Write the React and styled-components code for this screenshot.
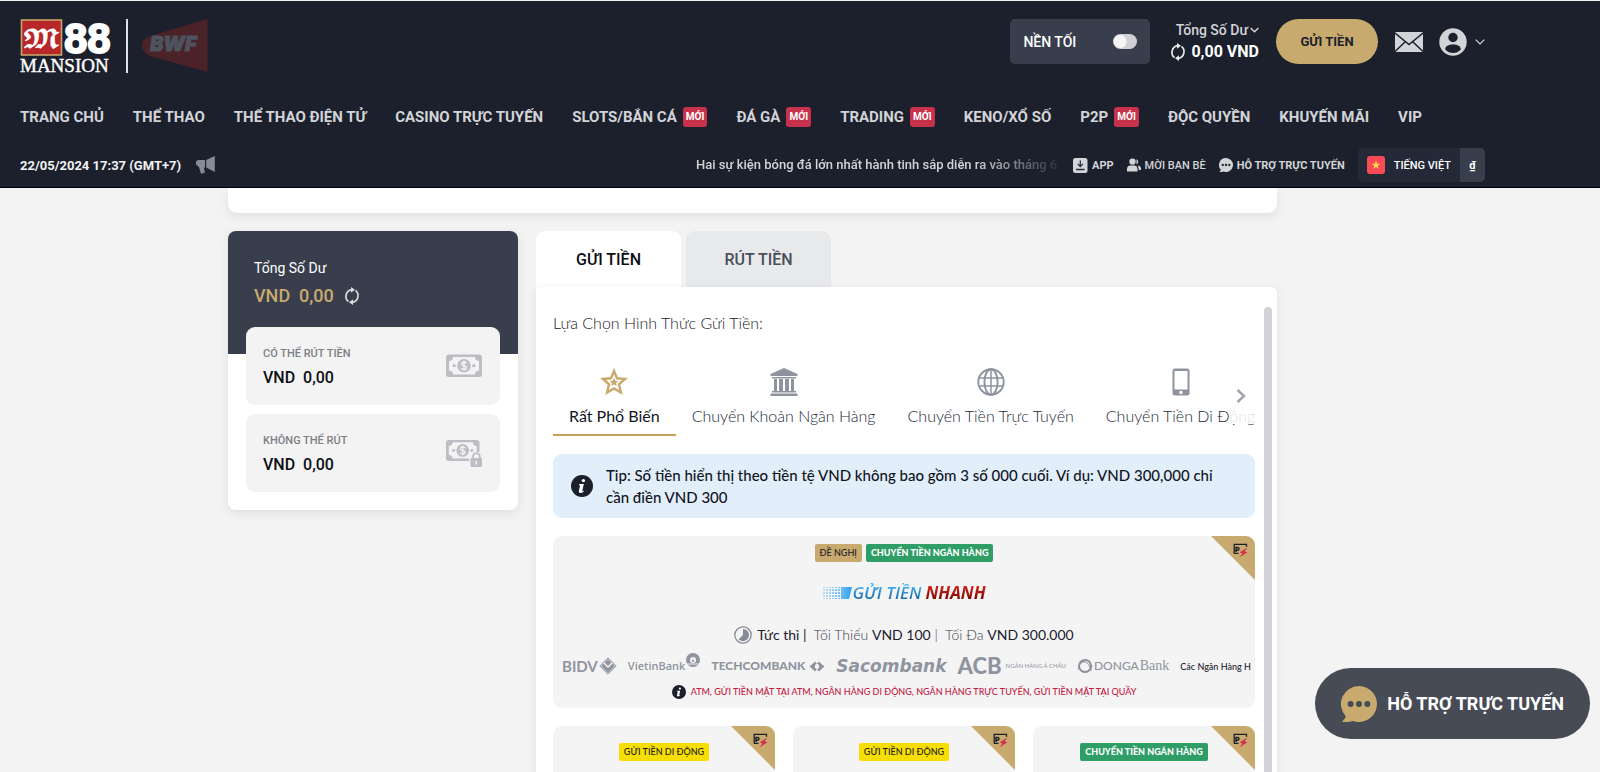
import React from "react";
import styled, { createGlobalStyle } from "styled-components";

const Global = createGlobalStyle`
  * { box-sizing: border-box; }
  body { margin: 0; background: #f3f3f3; font-family: Roboto, "Liberation Sans", sans-serif; }
  button { font: inherit; color: inherit; background: none; border: 0; padding: 0; cursor: pointer; }
  a { color: inherit; text-decoration: none; }
  svg { display: block; flex: none; }
`;

const Page = styled.div`
  height: 100vh;
  overflow: hidden;
  display: flex;
  flex-direction: column;
`;

/* Header */
const Header = styled.header`
  flex: none;
  position: relative;
  z-index: 2;
  background: #1b202c;
  border-top: 1px solid #eef1f1;
  border-bottom: 1px solid #000;
`;
const HeaderInner = styled.div`
  max-width: 1505px;
  padding: 18px 20px 5px;
`;
const TopRow = styled.div`
  display: flex;
  justify-content: space-between;
  align-items: flex-start;
  height: 54px;
`;
const Brand = styled.a`
  display: flex;
  align-items: center;
  gap: 14px;
`;
const BrandRule = styled.span`
  width: 2px;
  height: 54px;
  background: #dfe1e4;
`;
const Account = styled.div`
  display: flex;
  align-items: center;
  height: 45px;
  color: #d3d4d8;
`;
const ThemeSwitch = styled.label`
  display: flex;
  align-items: center;
  justify-content: space-between;
  width: 140px;
  height: 45px;
  padding: 0 13px;
  border-radius: 5px;
  background: #393e4d;
  color: #fff;
  font-size: 14px;
  font-weight: 500;
  cursor: pointer;
  input {
    appearance: none;
    width: 24px;
    height: 15px;
    margin: 0;
    border-radius: 8px;
    background: radial-gradient(circle at 7px 50%, #f5f5f5 6px, transparent 7px) #cfd0d3;
  }
`;
const Balance = styled.div`
  display: flex;
  flex-direction: column;
  align-items: flex-end;
  gap: 2px;
  margin: 0 17px 0 20px;
  padding-bottom: 2px;
`;
const BalanceLabel = styled.button`
  display: flex;
  align-items: center;
  gap: 2px;
  font-size: 14px;
  font-weight: 500;
  line-height: 20px;
`;
const BalanceValue = styled.div`
  display: flex;
  align-items: center;
  gap: 5px;
  color: #fff;
  font-size: 16px;
  font-weight: 700;
  line-height: 20px;
`;
const DepositButton = styled.button`
  width: 102px;
  height: 45px;
  border-radius: 23px;
  background: #c9aa6e;
  color: #1b202c;
  font-size: 13px;
  font-weight: 700;
`;
const MailButton = styled.button`
  margin-left: 17px;
`;
const UserButton = styled.button`
  display: flex;
  align-items: center;
  gap: 8px;
  margin-left: 16px;
`;
const Nav = styled.nav`
  display: flex;
  align-items: center;
  gap: 29px;
  height: 48px;
  margin-top: 20px;
  color: #d3d4d8;
  font-size: 15px;
  font-weight: 700;
  white-space: nowrap;
`;
const NavLink = styled.a`
  display: flex;
  align-items: center;
  gap: 6px;
`;
const NewBadge = styled.span`
  padding: 0 3px;
  border-radius: 3px;
  background: #c8314b;
  color: #fff;
  font-size: 10px;
  font-weight: 700;
  line-height: 20px;
`;
const InfoRow = styled.div`
  display: flex;
  align-items: center;
  height: 34px;
  margin-top: 7px;
  color: #d3d4d8;
  font-size: 11px;
  font-weight: 500;
  white-space: nowrap;
`;
const Clock = styled.time`
  margin-right: 15px;
  color: #f2f2f2;
  font-size: 13px;
  font-weight: 700;
`;
const Ticker = styled.p`
  flex: none;
  width: 370px;
  margin: 0 7px 0 auto;
  font-size: 13px;
  font-weight: 500;
  line-height: 20px;
  mask-image: linear-gradient(90deg, #000 75%, transparent);
`;
const QuickLinks = styled.div`
  display: flex;
  align-items: center;
  gap: 13px;
  margin-right: 13px;
`;
const QuickLink = styled.a`
  display: flex;
  align-items: center;
  gap: 4px;
  font-weight: ${(p) => (p.$strong ? 700 : 500)};
`;
const Locale = styled.div`
  display: flex;
  height: 34px;
  border-radius: 5px;
  overflow: hidden;
  background: #232937;
  color: #fff;
`;
const LanguageButton = styled.button`
  display: flex;
  align-items: center;
  gap: 9px;
  padding: 0 9px;
`;
const CurrencyButton = styled.button`
  width: 25px;
  background: #393e4d;
  font-weight: 700;
`;

/* Main area */
const Main = styled.main`
  flex: 1;
  min-height: 0;
  width: 100%;
  max-width: 1505px;
  padding: 0 228px;
  display: flex;
  flex-direction: column;
`;
const PreviousCard = styled.section`
  flex: none;
  height: 25px;
  border-radius: 0 0 9px 9px;
  background: #fff;
  box-shadow: 0 3px 10px rgba(40, 45, 60, 0.1);
`;
const Columns = styled.div`
  flex: 1;
  min-height: 0;
  display: flex;
  align-items: flex-start;
  gap: 18px;
  margin-top: 18px;
`;
const Wallet = styled.aside`
  flex: none;
  width: 290px;
  border-radius: 8px;
  background: linear-gradient(#393e4d 123px, #fff 123px);
  box-shadow: 0 3px 10px rgba(40, 45, 60, 0.1);
`;
const WalletHead = styled.div`
  height: 96px;
  padding: 25px 26px 0;
  color: #fff;
  font-size: 14px;
  line-height: 24px;
`;
const WalletTotal = styled.div`
  display: flex;
  align-items: center;
  gap: 10px;
  margin-top: 4px;
  color: #c9aa6e;
  font-size: 18px;
  font-weight: 500;
  white-space: pre;
`;
const WalletList = styled.div`
  display: flex;
  flex-direction: column;
  gap: 9px;
  padding: 0 18px 18px;
`;
const WalletItem = styled.div`
  display: flex;
  align-items: center;
  justify-content: space-between;
  height: 78px;
  padding: 0 18px 0 17px;
  border-radius: 9px;
  background: #f3f3f3;
`;
const WalletText = styled.div`
  color: #0d0f14;
  font-size: 16px;
  font-weight: 500;
  line-height: 24px;
  white-space: pre;
  small {
    display: block;
    color: #7d8085;
    font-size: 11px;
    font-weight: 500;
  }
`;
const Cashier = styled.section`
  flex: 1;
  min-width: 0;
  height: 100%;
  display: flex;
  flex-direction: column;
`;
const CashierTabs = styled.div`
  display: flex;
  gap: 5px;
`;
const CashierTab = styled.button`
  width: 145px;
  height: 56px;
  border-radius: 9px 9px 0 0;
  background: ${(p) => (p.$active ? "#fff" : "#e8e9eb")};
  color: ${(p) => (p.$active ? "#0d0f14" : "#4a4f5b")};
  font-size: 16px;
  font-weight: 500;
`;
const Panel = styled.div`
  flex: 1;
  min-height: 0;
  display: flex;
  gap: 9px;
  padding: 20px 5px 0 17px;
  border-radius: 0 6px 0 0;
  background: #fff;
  box-shadow: 0 3px 10px rgba(40, 45, 60, 0.1);
  font-family: Lato, "Liberation Sans", sans-serif;
`;
const PanelBody = styled.div`
  flex: 1;
  min-width: 0;
  overflow: hidden;
`;
const ScrollThumb = styled.div`
  flex: none;
  width: 8px;
  border-radius: 4px 4px 0 0;
  background: #d2d3d8;
`;
const Heading = styled.h2`
  margin: 4px 0 0;
  color: #1b202c;
  font-size: 16px;
  font-weight: 300;
  line-height: 24px;
`;
const MethodTabs = styled.div`
  position: relative;
  display: flex;
  margin-top: 33px;
  overflow: hidden;
`;
const MethodTab = styled.button`
  flex: none;
  display: flex;
  flex-direction: column;
  align-items: center;
  gap: 8px;
  height: 68px;
  padding: 0 16px;
  border-bottom: 2px solid ${(p) => (p.$active ? "#c9a15a" : "transparent")};
  color: ${(p) => (p.$active ? "#11151f" : "#242a38")};
  font-size: 16px;
  font-weight: ${(p) => (p.$active ? 400 : 300)};
  line-height: 24px;
  svg { color: ${(p) => (p.$active ? "#c9aa6e" : "#8e939e")}; }
`;
const NextButton = styled.button`
  position: absolute;
  top: 0;
  right: 0;
  display: flex;
  align-items: center;
  height: 56px;
  padding: 0 9px 0 6px;
  background: rgba(255, 255, 255, 0.85);
`;
const Tip = styled.div`
  display: flex;
  align-items: center;
  gap: 13px;
  margin-top: 18px;
  padding: 10px 18px;
  border-radius: 9px;
  background: #e2eefa;
  color: #11151f;
  font-size: 15px;
  font-weight: 500;
  line-height: 22px;
  p { margin: 0; }
`;
const MethodCard = styled.article`
  position: relative;
  display: flex;
  flex-direction: column;
  align-items: center;
  min-height: ${(p) => (p.$wide ? 172 : 160)}px;
  padding: ${(p) => (p.$wide ? "8px 9px 0" : "17px 9px 0")};
  border-radius: 9px;
  background: #f4f4f5;
  overflow: hidden;
`;
const Methods = styled.div`
  display: grid;
  grid-template-columns: repeat(3, 1fr);
  gap: 18px;
  margin-top: 18px;
  ${MethodCard}:first-child { grid-column: 1 / -1; }
`;
const Corner = styled.span`
  position: absolute;
  top: 0;
  right: 0;
  width: 44px;
  height: 44px;
  padding: 7px 7px 0 22px;
  background: #c9aa6e;
  clip-path: polygon(0 0, 100% 0, 100% 100%);
`;
const Tags = styled.div`
  display: flex;
  gap: 4px;
`;
const tagColors = {
  gold: "#c9aa6e",
  green: "#2e9d66",
  yellow: "#f6de00",
};
const Tag = styled.span`
  padding: 0 5px;
  border-radius: 2px;
  background: ${(p) => tagColors[p.$tone]};
  color: ${(p) => (p.$tone === "green" ? "#fff" : "#1b202c")};
  font-size: 9px;
  font-weight: ${(p) => (p.$tone === "green" ? 900 : 500)};
  line-height: 18px;
  white-space: nowrap;
`;
const MethodName = styled.h3`
  display: flex;
  align-items: center;
  margin: 17px 0 0;
  font-family: "Open Sans", "Noto Sans", sans-serif;
  font-size: 17px;
  font-style: italic;
  font-weight: 600;
  line-height: 28px;
  span {
    padding-right: 4px;
    background: linear-gradient(#3fb0f5 25%, #125c9e 80%);
    background-clip: text;
    color: transparent;
  }
  b {
    padding-right: 2px;
    background: linear-gradient(#d3231b 25%, #6b0804 80%);
    background-clip: text;
    color: transparent;
    font-weight: 700;
  }
`;
const Limits = styled.p`
  display: flex;
  align-items: center;
  margin: 18px 0 0;
  color: #3b404d;
  font-size: 14px;
  font-weight: 300;
  line-height: 20px;
  white-space: pre;
  b { color: #1b202c; font-weight: 400; }
  svg { margin-right: 5px; }
`;
const BankStrip = styled.div`
  align-self: stretch;
  display: flex;
  align-items: center;
  height: 28px;
  margin-top: 7px;
  gap: 11px;
  color: #8f949e;
  white-space: nowrap;
`;
const Bank = styled.span`
  display: flex;
  align-items: ${(p) => p.$align || "center"};
  gap: ${(p) => p.$gap || 1}px;
`;
const BankWord = styled.span`
  font-family: ${(p) => p.$family || "Lato"}, sans-serif;
  font-size: ${(p) => p.$size}px;
  font-weight: ${(p) => p.$weight || 400};
  font-style: ${(p) => (p.$italic ? "italic" : "normal")};
  line-height: 26px;
`;
const MoreBanks = styled.span`
  color: #1b202c;
  font-size: 9px;
  font-weight: 500;
`;
const Channels = styled.p`
  display: flex;
  align-items: center;
  gap: 5px;
  margin: 5px 0 0;
  color: #c3203f;
  font-size: 9px;
  font-weight: 500;
  line-height: 14px;
  white-space: nowrap;
`;
const ChatButton = styled.button`
  position: fixed;
  right: 10px;
  bottom: 33px;
  z-index: 3;
  display: flex;
  align-items: center;
  gap: 10px;
  height: 71px;
  padding: 0 26px;
  border-radius: 36px;
  background: #474b55;
  color: #fff;
  font-size: 18px;
  font-weight: 700;
`;

/* Drawings */
const MansionLogo = () => (
  <svg width="92" height="54" viewBox="0 0 92 54" overflow="visible" aria-label="M88 Mansion">
    <rect x="1.5" y="1" width="40" height="35" fill="#b8272a" stroke="#c8a36a" strokeWidth="1.6" />
    <text x="21.5" y="28" fill="#fff" stroke="#fff" strokeWidth="0.8" fontSize="25" textAnchor="middle" fontFamily="'DejaVu Math TeX Gyre', 'DejaVu Sans', serif">𝕸</text>
    <text x="44" y="34" fill="#fff" stroke="#fff" strokeWidth="1.8" fontSize="42" fontWeight="700" fontFamily="Liberation Sans">88</text>
    <text x="0" y="53" fill="#fff" stroke="#fff" strokeWidth="0.4" fontSize="19" fontFamily="Liberation Serif">MANSION</text>
  </svg>
);
const BwfLogo = () => (
  <svg width="66" height="54" viewBox="0 0 66 54" aria-label="BWF">
    <path d="M65.500 0V53L8 37Q0 33 0 26.500T8 17Z" fill="#4a2227" />
    <text x="8" y="32" fill="#4d535e" stroke="#4d535e" fontSize="20" fontWeight="900" fontStyle="italic" fontFamily="Inter">BWF</text>
  </svg>
);
const Chevron = ({ width = 9, right = false, stroke = 1.6 }) =>
  right ? (
    <svg width="10" height="14" viewBox="0 0 10 14" fill="none" stroke="#a2a5ae" strokeWidth="2.500"><path d="M1.500 1l6.500 6-6.500 6" /></svg>
  ) : (
    <svg width={width} height="6" viewBox="0 0 10 6" fill="none" stroke="currentColor" strokeWidth={stroke}><path d="M.7.7L5 5 9.300.7" /></svg>
  );
const Refresh = ({ color = "#e9eaec" }) => (
  <svg width="16" height="18" viewBox="0 0 16 18" fill="none" stroke={color} strokeWidth="1.700">
    <path d="M4.500 14.700A6.900 6.900 0 0 1 7.500 2.600M11.500 3.300A6.900 6.900 0 0 1 8.500 15.400" />
    <path d="M7 0l4 2.700-4 3zM9 12.300l-4 3L9 18z" fill={color} stroke="none" />
  </svg>
);
const Mail = () => (
  <svg width="28" height="20" viewBox="0 0 28 20">
    <rect width="28" height="20" rx="1" fill="#d3d4d8" />
    <path d="M0 1l14 11.500L28 1M0 19.500l10.500-10M28 19.500l-10.500-10" fill="none" stroke="#1b202c" strokeWidth="1.500" />
  </svg>
);
const User = () => (
  <svg width="28" height="28" viewBox="0 0 28 28">
    <circle cx="14" cy="14" r="13.700" fill="#d3d4d8" />
    <circle cx="14" cy="9.500" r="4.700" fill="#1b202c" />
    <path d="M6.200 21.500C6.200 17.800 9.500 16.400 14 16.400s7.800 1.400 7.800 5.100C19.500 24 17 25 14 25s-5.500-1-7.800-3.500z" fill="#1b202c" />
  </svg>
);
const Megaphone = () => (
  <svg width="19" height="18" viewBox="0 0 19 18" fill="#878b95">
    <path d="M0 5.500L2 4h7v7.500l-1 .3.800 5-3.800.9L3 11 0 8.500zM10.200 4L18.800 0v16l-8.600-4.500z" />
  </svg>
);
const AppIcon = () => (
  <svg width="15" height="15" viewBox="0 0 15 15">
    <rect width="14.500" height="15" rx="2.500" fill="#d3d4d8" />
    <path d="M7.300 2.500v5.500M4.800 6l2.500 2.600L9.800 6M3 11.500h8.600" stroke="#2b303c" strokeWidth="1.300" fill="none" />
  </svg>
);
const Friends = () => (
  <svg width="14" height="14" viewBox="0 0 14 14" fill="#d3d4d8">
    <circle cx="5.500" cy="3.600" r="3.200" />
    <path d="M0 13.500V11c0-2 1.500-3.400 3-3.400h4.500c1.500 0 3 1.400 3 3.400v2.500zM9.500 1.200a2.800 2.800 0 0 1 0 5.200zM10.500 7.500c2.200 0 3.500 1.200 3.500 3V12h-2.300c0-2-.3-3.500-1.200-4.500z" />
  </svg>
);
const Chat = ({ size, fill, dots }) => (
  <svg width={size} height={size} viewBox="0 0 36 36">
    <path d="M18 0a18 18 0 1 1-6 35C9 36 5 36.500 1.500 36 1 35 4.500 33 4.800 30.300A18 18 0 0 1 18 0z" fill={fill} />
    <g fill={dots}><circle cx="9.600" cy="18" r="3" /><circle cx="18" cy="18" r="3" /><circle cx="26.400" cy="18" r="3" /></g>
  </svg>
);
const Flag = () => (
  <svg width="18" height="18" viewBox="0 0 18 18">
    <rect width="18" height="18" rx="3" fill="#fb4a55" />
    <path d="M9 4.800l1.100 3h3.200l-2.600 1.900 1 3.100L9 10.900l-2.700 1.900 1-3.100-2.600-1.900h3.200z" fill="#ffe04a" />
  </svg>
);
const Banknote = ({ locked }) => (
  <svg width="36" height="28" viewBox="0 0 36 28">
    <g transform={locked ? "translate(0 1) scale(.93)" : "translate(0 2.500)"}>
      <rect width="36" height="22.500" rx="3" fill="#bcbdc5" />
      <path d="M7 2.500h22a4 4 0 0 0 4 4v9.500a4 4 0 0 0-4 4H7a4 4 0 0 0-4-4V6.500a4 4 0 0 0 4-4z" fill="#f3f3f3" />
      <circle cx="18" cy="11.200" r="6.800" fill="#bcbdc5" />
      <circle cx="8.200" cy="11.200" r="1.600" fill="#bcbdc5" /><circle cx="27.800" cy="11.200" r="1.600" fill="#bcbdc5" />
      <path d="M20.500 8.800c-.5-1-1.500-1.300-2.500-1.300-1.500 0-2.500.7-2.500 1.800 0 2.700 5 1.300 5 3.900 0 1.100-1 1.800-2.500 1.800-1.100 0-2.100-.4-2.600-1.400M18 6v10.500" fill="none" stroke="#f3f3f3" strokeWidth="1.400" />
    </g>
    {locked && (
      <g>
        <rect x="23" y="13" width="13" height="15" fill="#f3f3f3" />
        <path d="M27 20v-2.500a3.400 3.400 0 0 1 6.800 0V20" fill="none" stroke="#bcbdc5" strokeWidth="1.800" />
        <rect x="24.500" y="19" width="11.500" height="9" rx="1" fill="#bcbdc5" />
        <path d="M30.200 22v3.500" stroke="#f3f3f3" strokeWidth="1.600" />
      </g>
    )}
  </svg>
);
const Star = () => (
  <svg width="28" height="28" viewBox="0 0 28 28">
    <path d="M14 3l3.100 7.300 8 .7-6.100 5.300 1.900 8.200L14 20.400l-6.900 4.100L9 16.300 2.900 11l8-.7z" fill="none" stroke="currentColor" strokeWidth="2.400" />
    <path d="M14 10l1.300 2.800 3 .3-2.200 2 .7 3-2.800-1.600-2.800 1.600.7-3-2.200-2 3-.3z" fill="currentColor" />
  </svg>
);
const BankIcon = () => (
  <svg width="28" height="28" viewBox="0 0 28 28" fill="currentColor">
    <path d="M14 0l13.500 6v2H.5V6zM2 9h24v1.500H2zM4 11h3v12H4zM9 11h4v12H9zM15 11h4v12h-4zM21 11h3v12h-3zM2 23h24v1.600H2zM.5 25.500h27V28H.5z" />
  </svg>
);
const Globe = () => (
  <svg width="28" height="28" viewBox="0 0 28 28" fill="none" stroke="currentColor" strokeWidth="1.900">
    <circle cx="14" cy="14" r="12.700" /><ellipse cx="14" cy="14" rx="6.600" ry="12.700" />
    <path d="M14 1.300v25.400M3 10h22M3 18h22" strokeWidth="1.500" />
  </svg>
);
const Phone = () => (
  <svg width="28" height="28" viewBox="0 0 28 28">
    <rect x="5.500" y=".5" width="17" height="27" rx="2.500" fill="currentColor" />
    <rect x="7.500" y="3" width="13" height="18.500" fill="#fff" /><circle cx="14" cy="24.500" r="1.700" fill="#fff" />
  </svg>
);
const Info = ({ size }) => (
  <svg width={size} height={size} viewBox="0 0 22 22">
    <circle cx="11" cy="11" r="11" fill="#1b202c" />
    <circle cx="12.400" cy="5.600" r="1.700" fill="#fff" />
    <path d="M8.300 9h4.600l-1.600 6.600c0 .5.700.5 1.700-.1-.5 1.700-2 2.500-3.300 2.500-1.600 0-2.100-1-1.800-2.300l1.200-5.100-1.200-.4z" fill="#fff" />
  </svg>
);
const Timer = () => (
  <svg width="18" height="18" viewBox="0 0 18 18">
    <circle cx="9" cy="9" r="8.200" fill="none" stroke="#858a95" strokeWidth="1.300" />
    <path d="M9 3a6 6 0 1 1-4.300 10.200L9 9z" fill="#858a95" />
  </svg>
);
const PromoIcon = () => (
  <svg width="15" height="15" viewBox="0 0 15 15">
    <path d="M1.200 10.500V1.300h12.300v2.500M1 10.300h4.500" fill="none" stroke="#1b202c" strokeWidth="1.300" />
    <path d="M3 9V4.500h1.700q1.300 0 1.300 1.300T4.700 7.200H3" fill="none" stroke="#1b202c" strokeWidth="1.500" />
    <path d="M14.500 4.500L6.500 9.500l3 .7-3 4 8-5-3-.8z" fill="#d52b4c" />
  </svg>
);
const Streaks = () => (
  <svg width="32" height="14" viewBox="0 0 32 14">
    <defs>
      <linearGradient id="streak"><stop offset="0" stopColor="#4db5f5" stopOpacity="0.300" /><stop offset="1" stopColor="#2f9fee" /></linearGradient>
      <pattern id="dots" width="3" height="3" patternUnits="userSpaceOnUse"><rect width="2" height="2" fill="#fff" /></pattern>
      <mask id="grid"><rect width="22" height="14" fill="url(#dots)" /><rect x="21" width="11" height="14" fill="#fff" /></mask>
    </defs>
    <path d="M2 1h30l-3 12H2z" fill="url(#streak)" mask="url(#grid)" />
  </svg>
);
const Diamond = () => (
  <svg width="18" height="18" viewBox="0 0 18 18">
    <path d="M9 .8L17.200 9 9 17.200.8 9z" fill="none" stroke="#8f949e" strokeWidth="1" />
    <path d="M9 2l3.500 3.500L9 9 5.500 5.500zM2 9l2.500-2.500L9 11l4.500-4.500L16 9l-7 7z" fill="#8f949e" />
  </svg>
);
const VietinMark = () => (
  <svg width="14" height="14" viewBox="0 0 14 14"><circle cx="7" cy="7" r="7" fill="#8f949e" /><circle cx="7" cy="7" r="3" fill="#f4f4f5" /><path d="M5.500 6.200h3v3h-3zM1 11h12" fill="#8f949e" stroke="#f4f4f5" /></svg>
);
const TechMark = () => (
  <svg width="16" height="11" viewBox="0 0 16 11" fill="none" stroke="#8f949e" strokeWidth="2.600"><path d="M7 1.500L2.500 5.500 7 9.500M9 1.500l4.500 4-4.500 4M4 5.500h2M10 5.500h2" /></svg>
);
const DongaMark = () => (
  <svg width="16" height="15" viewBox="0 0 16 15" fill="none" stroke="#8f949e"><ellipse cx="8" cy="7" rx="6" ry="6" strokeWidth="2" /><path d="M1 10C3 3 8 0 13 2M15 6c0 6-6 9-11 6M3 4c5-3 10 0 11 8" strokeWidth="1" /></svg>
);

const navItems = [
  ["TRANG CHỦ"], ["THỂ THAO"], ["THỂ THAO ĐIỆN TỬ"], ["CASINO TRỰC TUYẾN"], ["SLOTS/BẮN CÁ", true], ["ĐÁ GÀ", true],
  ["TRADING", true], ["KENO/XỔ SỐ"], ["P2P", true], ["ĐỘC QUYỀN"], ["KHUYẾN MÃI"], ["VIP"],
];
const methodTabs = [
  ["Rất Phổ Biến", Star], ["Chuyển Khoản Ngân Hàng", BankIcon], ["Chuyển Tiền Trực Tuyến", Globe], ["Chuyển Tiền Di Động", Phone],
];
const smallMethods = [
  ["GỬI TIỀN DI ĐỘNG", "yellow"], ["GỬI TIỀN DI ĐỘNG", "yellow"], ["CHUYỂN TIỀN NGÂN HÀNG", "green"],
];

const PromoCorner = () => <Corner><PromoIcon /></Corner>;

export default function App() {
  return (
    <Page>
      <Global />
      <Header>
        <HeaderInner>
          <TopRow>
            <Brand href="#home"><MansionLogo /><BrandRule /><BwfLogo /></Brand>
            <Account>
              <ThemeSwitch>NỀN TỐI<input type="checkbox" role="switch" /></ThemeSwitch>
              <Balance>
                <BalanceLabel>Tổng Số Dư<Chevron /></BalanceLabel>
                <BalanceValue><Refresh />0,00 VND</BalanceValue>
              </Balance>
              <DepositButton>GỬI TIỀN</DepositButton>
              <MailButton aria-label="Hộp thư"><Mail /></MailButton>
              <UserButton aria-label="Tài khoản"><User /><Chevron width={10} stroke={1.2} /></UserButton>
            </Account>
          </TopRow>
          <Nav>
            {navItems.map(([label, isNew]) => (
              <NavLink href="#nav" key={label}>{label}{isNew && <NewBadge>MỚI</NewBadge>}</NavLink>
            ))}
          </Nav>
          <InfoRow>
            <Clock>22/05/2024 17:37 (GMT+7)</Clock>
            <Megaphone />
            <Ticker>Hai sự kiện bóng đá lớn nhất hành tinh sắp diễn ra vào tháng 6</Ticker>
            <QuickLinks>
              <QuickLink href="#app" $strong><AppIcon />APP</QuickLink>
              <QuickLink href="#invite"><Friends />MỜI BẠN BÈ</QuickLink>
              <QuickLink href="#support" $strong><Chat size={14} fill="#d3d4d8" dots="#1b202c" />HỖ TRỢ TRỰC TUYẾN</QuickLink>
            </QuickLinks>
            <Locale>
              <LanguageButton><Flag />TIẾNG VIỆT</LanguageButton>
              <CurrencyButton>₫</CurrencyButton>
            </Locale>
          </InfoRow>
        </HeaderInner>
      </Header>
      <Main>
        <PreviousCard />
        <Columns>
          <Wallet>
            <WalletHead>
              Tổng Số Dư
              <WalletTotal>{"VND  0,00"}<Refresh color="#d9dadd" /></WalletTotal>
            </WalletHead>
            <WalletList>
              <WalletItem><WalletText><small>CÓ THỂ RÚT TIỀN</small>{"VND  0,00"}</WalletText><Banknote /></WalletItem>
              <WalletItem><WalletText><small>KHÔNG THỂ RÚT</small>{"VND  0,00"}</WalletText><Banknote locked /></WalletItem>
            </WalletList>
          </Wallet>
          <Cashier>
            <CashierTabs>
              <CashierTab $active>GỬI TIỀN</CashierTab>
              <CashierTab>RÚT TIỀN</CashierTab>
            </CashierTabs>
            <Panel>
              <PanelBody>
                <Heading>Lựa Chọn Hình Thức Gửi Tiền:</Heading>
                <MethodTabs>
                  {methodTabs.map(([label, Icon], i) => (
                    <MethodTab key={label} $active={i === 0}><Icon />{label}</MethodTab>
                  ))}
                  <NextButton aria-label="Tiếp"><Chevron right /></NextButton>
                </MethodTabs>
                <Tip>
                  <Info size={22} />
                  <p>Tip: Số tiền hiển thị theo tiền tệ VND không bao gồm 3 số 000 cuối. Ví dụ: VND 300,000 chỉ cần điền VND 300</p>
                </Tip>
                <Methods>
                  <MethodCard $wide>
                    <PromoCorner />
                    <Tags><Tag $tone="gold">ĐỀ NGHỊ</Tag><Tag $tone="green">CHUYỂN TIỀN NGÂN HÀNG</Tag></Tags>
                    <MethodName><Streaks /><span>GỬI TIỀN</span><b>NHANH</b></MethodName>
                    <Limits>
                      <Timer /><b>{"Tức thì |  "}</b>Tối Thiểu <b>VND 100</b>{" |  "}Tối Đa <b>VND 300.000</b>
                    </Limits>
                    <BankStrip>
                      <Bank><BankWord $size={15} $weight={700}>BIDV</BankWord><Diamond /></Bank>
                      <Bank $align="flex-start"><BankWord $size={11} $family="Open Sans" $weight={600}>VietinBank</BankWord><VietinMark /></Bank>
                      <Bank $gap={4}><BankWord $size={12} $weight={900}>TECHCOMBANK</BankWord><TechMark /></Bank>
                      <BankWord $size={17} $family="DejaVu Sans" $weight={700} $italic>Sacombank</BankWord>
                      <Bank $gap={4}><BankWord $size={22} $weight={900}>ACB</BankWord><BankWord $size={6}>NGÂN HÀNG Á CHÂU</BankWord></Bank>
                      <Bank><DongaMark /><BankWord $size={12} $weight={500}>DONGA</BankWord><BankWord $size={14} $family="Liberation Serif">Bank</BankWord></Bank>
                      <MoreBanks>Các Ngân Hàng H</MoreBanks>
                    </BankStrip>
                    <Channels><Info size={14} />ATM, GỬI TIỀN MẶT TẠI ATM, NGÂN HÀNG DI ĐỘNG, NGÂN HÀNG TRỰC TUYẾN, GỬI TIỀN MẶT TẠI QUẦY</Channels>
                  </MethodCard>
                  {smallMethods.map(([label, tone], i) => (
                    <MethodCard key={i}><PromoCorner /><Tags><Tag $tone={tone}>{label}</Tag></Tags></MethodCard>
                  ))}
                </Methods>
              </PanelBody>
              <ScrollThumb />
            </Panel>
          </Cashier>
        </Columns>
      </Main>
      <ChatButton><Chat size={36} fill="#c9aa6e" dots="#474b55" />HỖ TRỢ TRỰC TUYẾN</ChatButton>
    </Page>
  );
}
